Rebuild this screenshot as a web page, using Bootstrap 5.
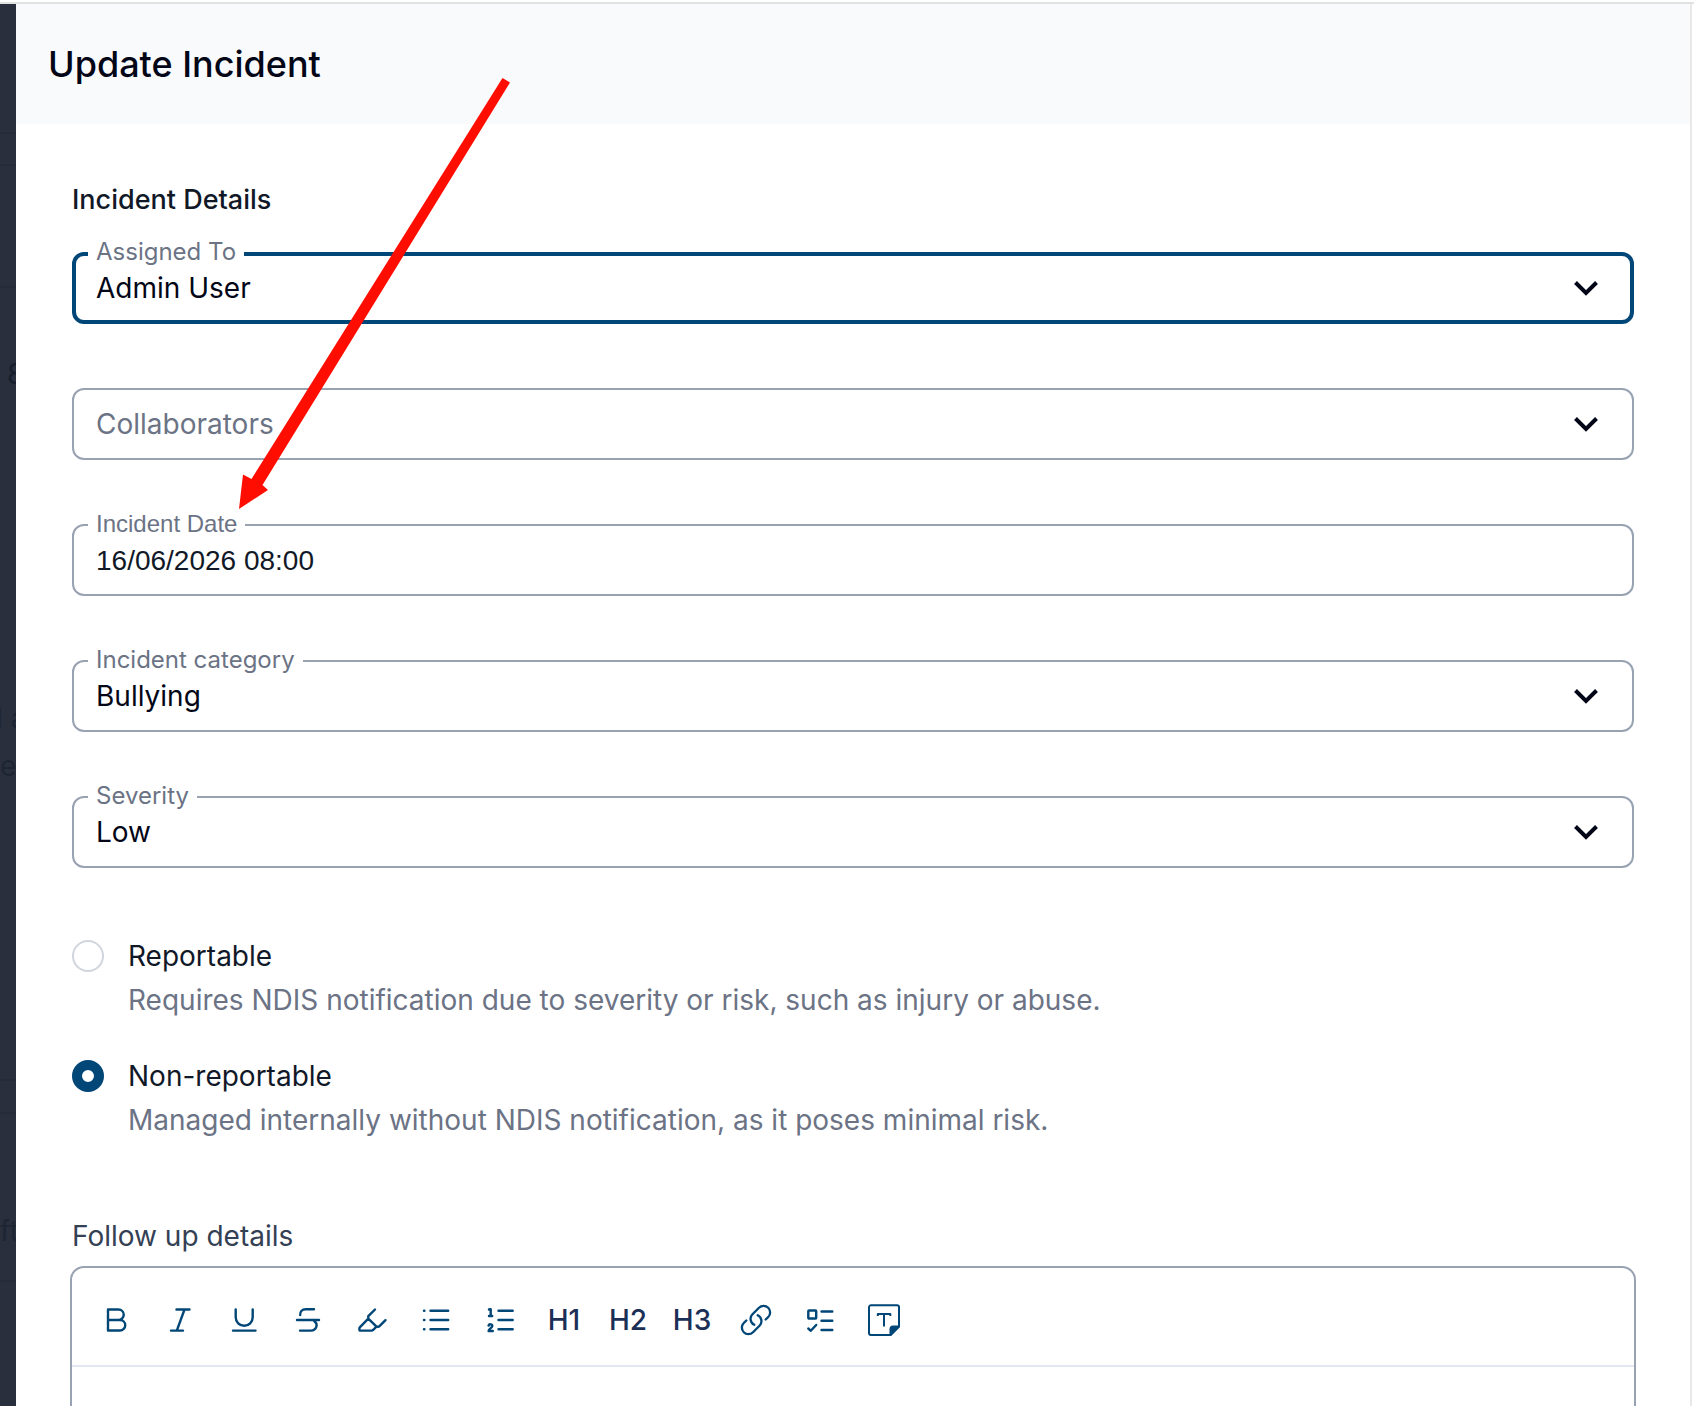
<!DOCTYPE html>
<html lang="en">
<head>
<meta charset="utf-8">
<meta name="viewport" content="width=device-width, initial-scale=1">
<title>Update Incident</title>
<link rel="stylesheet" href="https://cdn.jsdelivr.net/npm/bootstrap@5.3.0/dist/css/bootstrap.min.css">
<style>
  :root { --brand: #004677; --line: #98a2b3; --muted: #6b7385; --ink: #020617; }
  body { font-family: Inter, "Liberation Sans", sans-serif; font-size: 28px; line-height: 40px; color: #111827; background: #fff; }
  .app-frame { border-top: 2px solid #e0e2e2; margin-top: 2px; height: calc(100vh - 2px); padding-right: 2px; }
  .backdrop-strip { width: 16px; background: #292f3d; color: #161e2c; white-space: nowrap; }
  .strip-row { border-bottom: 2px solid #252b39; flex: none; }
  .row-a { height: 130px; } .row-b { height: 32px; } .row-c { height: 122px; }
  .row-d { height: 793px; } .row-e { height: 33px; } .row-f { height: 168px; }
  .strip-num { padding: 66px 0 0 7px; }
  .strip-gap { margin-top: 304px; text-indent: -4px; }
  .strip-text { color: #1d2534; }
  .strip-low { padding-top: 97px; color: #1d2534; }
  .panel { border-right: 2px solid #e8e8e8; min-width: 0; }
  .panel-head { background: #f9fafc; padding: 36px 32px; }
  .panel-head h1 { font-size: 36px; line-height: 48px; font-weight: 500; color: var(--ink); }
  .panel-body { padding: 56px 56px 0; }
  .section-title { font-size: 27px; line-height: 40px; font-weight: 500; margin-bottom: 32px; }
  .field { position: relative; margin-bottom: 64px; }
  .field .form-select, .field .form-control { height: 72px; border: 2px solid var(--line); border-radius: 12px; padding: 0 22px; font-size: 28px; line-height: 40px; color: var(--ink); background: #fff none; box-shadow: none; }
  .field.is-active .form-select { border: 4px solid var(--brand); padding: 0 20px; }
  .field .form-select.is-empty { color: var(--muted); }
  .field .float-label { position: absolute; left: 16px; top: -14px; padding: 0 8px; font-size: 24px; line-height: 28px; color: var(--muted); background: #fff; z-index: 1; }
  .field .date-input, .field .date-label { font-family: "Liberation Sans", Arial, sans-serif; }
  .field .date-input { padding-top: 2px; color: #111827; }
  .field .chevron { position: absolute; right: 32px; top: 20px; width: 32px; height: 32px; pointer-events: none; }
  .choice { display: grid; grid-template-columns: 32px 1fr; column-gap: 24px; row-gap: 4px; margin-bottom: 36px; }
  .choice .form-check-input { width: 32px; height: 32px; margin: 4px 0 0; border: 2px solid #d0d5dd; background: #fff none; box-shadow: none; }
  .choice .form-check-input:checked { border: 10px solid var(--brand); }
  .choice p { grid-column: 2; color: var(--muted); margin: 0; }
  .editor-label { color: #344054; margin: 76px 0 10px; display: block; }
  .editor { border: 2px solid var(--line); border-radius: 14px; margin: 0 -2px; }
  .toolbar { border-bottom: 2px solid #e1e7f0; padding: 20px 12px 13px; height: 99px; }
  .toolbar button { width: 64px; height: 64px; padding: 0; border: 0; background: none; color: #1b2f57; font-size: 28px; font-weight: 500; line-height: 40px; }
  .toolbar svg { width: 34px; height: 34px; display: block; margin: auto; fill: none; stroke: var(--brand); stroke-width: 2.4; stroke-linecap: round; stroke-linejoin: round; }
  .editor textarea { border: 0; height: 280px; background: transparent; resize: none; box-shadow: none; font-size: 28px; padding: 24px; }
  .pointer-arrow { position: absolute; left: 0; top: 0; width: 540px; height: 540px; pointer-events: none; z-index: 5; }
</style>
<script src="https://cdn.jsdelivr.net/npm/bootstrap@5.3.0/dist/js/bootstrap.bundle.min.js"></script>
</head>
<body class="overflow-hidden">
<div class="app-frame d-flex overflow-hidden">
  <aside class="backdrop-strip d-flex flex-column flex-shrink-0 overflow-hidden" aria-hidden="true">
    <div class="strip-row row-a"></div>
    <div class="strip-row row-b"></div>
    <div class="strip-row row-c"></div>
    <div class="strip-row row-d">
      <div class="strip-num">8</div>
      <div class="strip-text strip-gap">l a</div>
      <div class="strip-text mt-2">e</div>
    </div>
    <div class="strip-row row-e"></div>
    <div class="strip-row row-f strip-low">ft</div>
  </aside>
  <main class="panel flex-grow-1 bg-white">
    <header class="panel-head"><h1 class="m-0">Update Incident</h1></header>
    <form class="panel-body">
      <h2 class="section-title">Incident Details</h2>

      <div class="field is-active">
        <label class="float-label" for="assigned">Assigned To</label>
        <select class="form-select" id="assigned"><option>Admin User</option></select>
        <svg class="chevron" viewBox="0 0 32 32" fill="none" stroke="#020617" stroke-width="4"><path d="M5.500 10.500 16 21 26.500 10.500"/></svg>
      </div>
      <div class="field">
        <select class="form-select is-empty" id="collab" aria-label="Collaborators"><option>Collaborators</option></select>
        <svg class="chevron" viewBox="0 0 32 32" fill="none" stroke="#020617" stroke-width="4"><path d="M5.500 10.500 16 21 26.500 10.500"/></svg>
      </div>
      <div class="field">
        <label class="float-label date-label" for="date">Incident Date</label>
        <input class="form-control date-input" id="date" type="text" value="16/06/2026 08:00">
      </div>
      <div class="field">
        <label class="float-label" for="category">Incident category</label>
        <select class="form-select" id="category"><option>Bullying</option></select>
        <svg class="chevron" viewBox="0 0 32 32" fill="none" stroke="#020617" stroke-width="4"><path d="M5.500 10.500 16 21 26.500 10.500"/></svg>
      </div>
      <div class="field">
        <label class="float-label" for="severity">Severity</label>
        <select class="form-select" id="severity"><option>Low</option></select>
        <svg class="chevron" viewBox="0 0 32 32" fill="none" stroke="#020617" stroke-width="4"><path d="M5.500 10.500 16 21 26.500 10.500"/></svg>
      </div>

      <div class="pt-1">
        <div class="choice">
          <input class="form-check-input" type="radio" name="report" id="rep">
          <label for="rep">Reportable</label>
          <p>Requires NDIS notification due to severity or risk, such as injury or abuse.</p>
        </div>
        <div class="choice">
          <input class="form-check-input" type="radio" name="report" id="nonrep" checked>
          <label for="nonrep">Non-reportable</label>
          <p>Managed internally without NDIS notification, as it poses minimal risk.</p>
        </div>
      </div>

      <label class="editor-label" for="followup">Follow up details</label>
      <div class="editor">
        <div class="toolbar d-flex" role="toolbar" aria-label="Formatting">
          <button type="button" aria-label="Bold"><svg viewBox="-1 -1 34 34"><path d="M8 5.500h10.500a5.250 5.250 0 0 1 0 10.500H8zM8 16h12a5.250 5.250 0 0 1 0 10.500H8z"/></svg></button>
          <button type="button" aria-label="Italic"><svg viewBox="-1 -1 34 34"><path d="M12.500 5.500H25.500M7 26.600H19M20.500 5.500 12.800 26.600"/></svg></button>
          <button type="button" aria-label="Underline"><svg viewBox="-1 -1 34 34"><path d="M7.700 5.500v7.800a8.500 8.500 0 0 0 17 0V5.500M5 26.600h22.500"/></svg></button>
          <button type="button" aria-label="Strikethrough"><svg viewBox="-1 -1 34 34"><path d="M22 5.300h-8.200c-4 0-6 2.500-5.600 5.700M5 16h22M22.300 17.200c4.200 2.800 2.200 9.400-3.300 9.400H8"/></svg></button>
          <button type="button" aria-label="Highlight"><svg viewBox="-1 -1 34 34"><path d="M19 5.500 12.300 12.200v2.500l8.200 8-3.300 3.200a2.500 2.500 0 0 1-1.700.700H4.200a.8.800 0 0 1-.8-.8v-1.200a2 2 0 0 1 .6-1.400l8.300-8.500M20.500 22.700h1.600a2 2 0 0 0 1.400-.6L29.500 16.200"/></svg></button>
          <button type="button" aria-label="Bulleted list"><svg viewBox="-1 -1 34 34"><path d="M10.500 6.700H28.200M10.500 16H28.200M10.500 25.200H28.200M4 6.700h.4M4 16h.4M4 25.200h.4"/></svg></button>
          <button type="button" aria-label="Numbered list"><svg viewBox="-1 -1 34 34"><path d="M14.500 6.700H28.700M14.500 16H28.700M14.500 25.200H28.700M5 5.500 6.700 5.200V12M5 12h3.200M4.600 21.500c.6-1.800 4-1.500 3.600.7C7.900 24 4.600 25 4.600 27H8.800"/></svg></button>
          <button type="button">H1</button>
          <button type="button">H2</button>
          <button type="button">H3</button>
          <button type="button" aria-label="Link"><svg viewBox="-1 -1 34 34"><g transform="translate(-1.400 -1.400) scale(1.450)" stroke-width="1.600"><path d="M13.190 8.688a4.500 4.500 0 0 1 1.242 7.244l-4.500 4.500a4.500 4.500 0 0 1-6.364-6.364l1.757-1.757M18.675 11.689l1.757-1.757a4.500 4.500 0 0 0-6.364-6.364l-4.500 4.500a4.500 4.500 0 0 0 1.242 7.244"/></g></svg></button>
          <button type="button" aria-label="Checklist"><svg viewBox="-1 -1 34 34"><path d="M5 6.500h6.500a.7.700 0 0 1 .7.700v6.600a.7.700 0 0 1-.7.700H5a.7.700 0 0 1-.7-.7V7.200a.7.700 0 0 1 .7-.7zM17.500 7.500h10.800M17.500 16.700h10.800M17.500 26h10.800M4.300 24.500 6.800 26.800 12.200 21"/></svg></button>
          <button type="button" aria-label="Text note"><svg viewBox="-1 0 34 34"><g stroke-width="2"><path d="M22.500 32H3a2 2 0 0 1-2-2V4.300a2 2 0 0 1 2-2H29a2 2 0 0 1 2 2V23.500z"/><path d="M22.500 32V26a2.500 2.500 0 0 1 2.500-2.500H31z" fill="#004677"/><path d="M9.800 13v-2H22.300v2M16 11V23.500" stroke-linecap="butt"/></g></svg></button>
        </div>
        <textarea class="form-control" id="followup"></textarea>
      </div>
    </form>
  </main>
</div>
<svg class="pointer-arrow" viewBox="0 0 540 540" aria-hidden="true"><path d="M502.500 78 510 82.500 262.500 485 268 490 239 509 243 474.500 251.500 479z" fill="#ff0d00"/></svg>
</body>
</html>
